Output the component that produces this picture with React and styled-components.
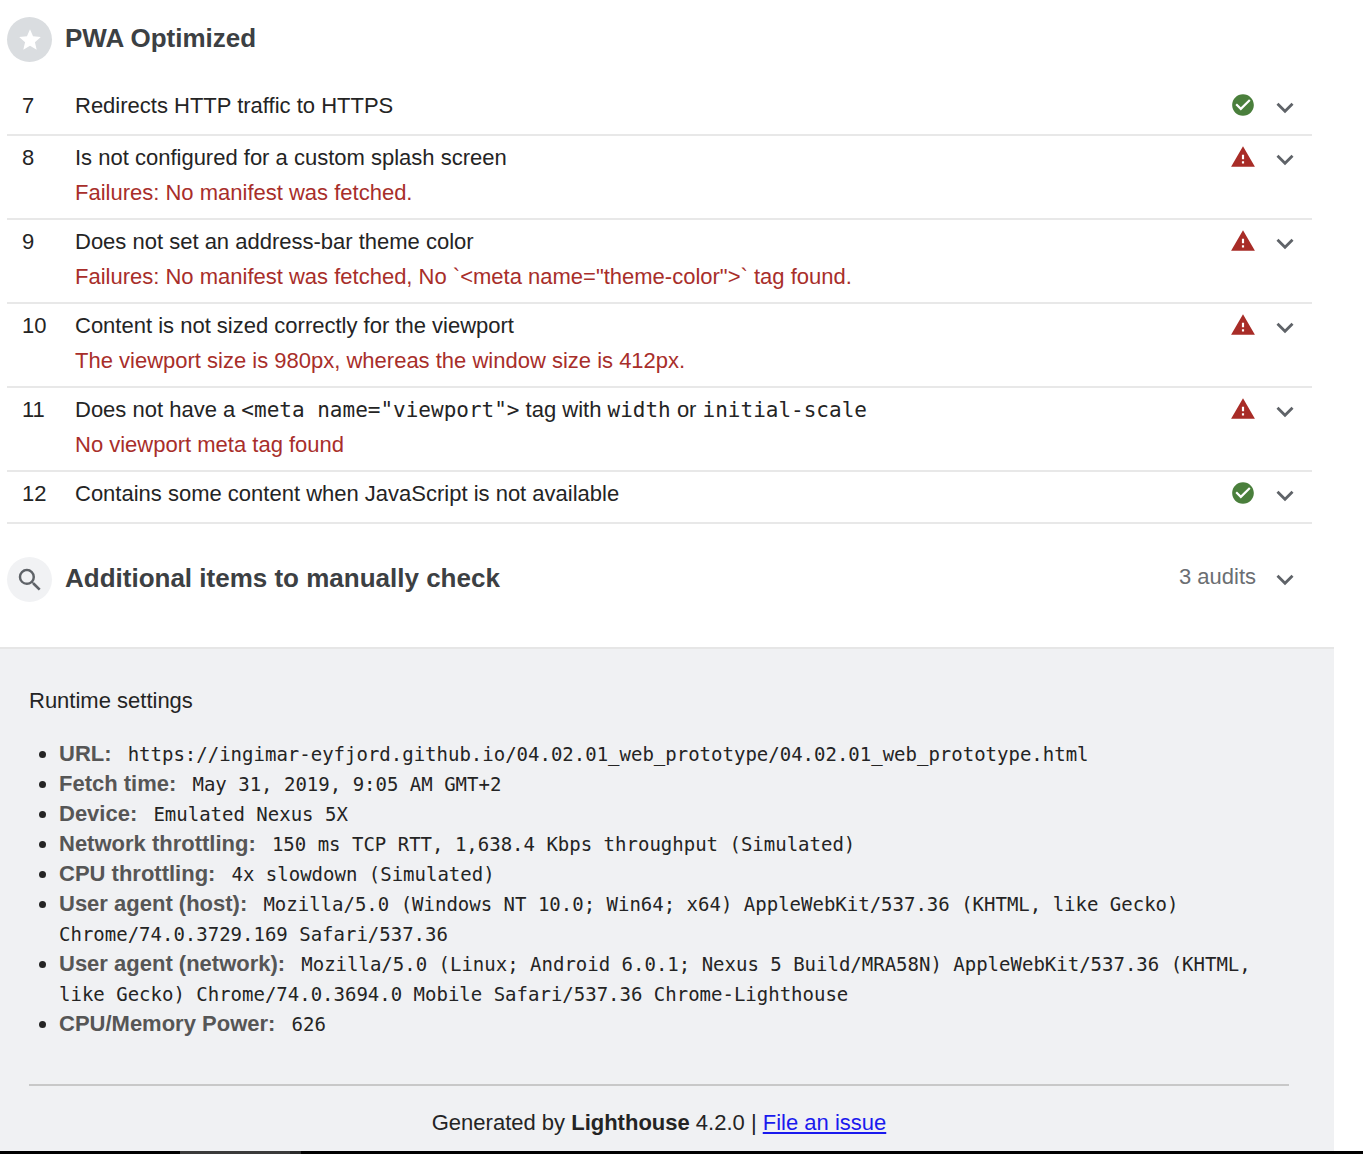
import React, { useState } from "react";
import styled, { createGlobalStyle } from "styled-components";

const GlobalStyle = createGlobalStyle`
  * { box-sizing: border-box; }
  body {
    margin: 0;
    background: #fff;
    color: #242424;
    font-family: "Liberation Sans", Arial, sans-serif;
    font-size: 22px;
    line-height: 36px;
  }
`;

const Page = styled.div`
  min-height: 100vh;
  display: flex;
  flex-direction: column;
`;

const Report = styled.div`
  flex: 1;
  display: flex;
  flex-direction: column;
  margin-right: 29px;
`;

const Category = styled.main`
  padding: 17px 22px 45px 7px;
`;

const GroupHeader = styled.header`
  display: flex;
  align-items: center;
  gap: 13px;
  padding-right: 10px;
`;

const Badge = styled.span`
  display: grid;
  place-items: center;
  flex: none;
  width: 45px;
  height: 45px;
  border-radius: 50%;
  color: ${(p) => (p.$strong ? "#fff" : "#5f6368")};
  background: ${(p) => (p.$strong ? "#dadde0" : "#f1f2f4")};
`;

const GroupTitle = styled.h2`
  flex: 1;
  margin: 0;
  padding-bottom: 3px;
  font-size: 26px;
  font-weight: 700;
  color: #3c4043;
`;

const Side = styled.div`
  display: flex;
  align-items: center;
  gap: 12px;
  height: 32px;
`;

const GroupSide = styled(Side)`
  height: 45px;
  padding-bottom: 5px;
`;

const AuditCount = styled.span`
  color: #6b6e72;
`;

const AuditList = styled.div`
  margin: 22px 0 33px;
`;

const Audit = styled.section`
  display: flex;
  min-height: 52px;
  padding: 5px 10px 8px 15px;
  border-bottom: 2px solid #e8e8e8;
  line-height: 34px;
`;

const AuditIndex = styled.span`
  flex: none;
  width: 53px;
`;

const AuditText = styled.div`
  flex: 1;
`;

const AuditTitle = styled.div`
  code {
    font-family: "DejaVu Sans Mono", monospace;
    font-size: 21px;
    line-height: 24px;
  }
`;

const Explanation = styled.div`
  line-height: 35px;
  color: #a82e2a;
`;

const Toggle = styled.button`
  display: flex;
  padding: 0;
  border: 0;
  background: none;
  color: #5f6368;
  cursor: pointer;
`;

const Footer = styled.footer`
  flex: 1;
  padding: 34px 45px 8px 29px;
  border-top: 2px solid #e6e6e6;
  background: #f0f1f3;
`;

const SettingsTitle = styled.div`
  margin-bottom: 20px;
`;

const Settings = styled.ul`
  margin: 0 0 45px;
  padding-left: 30px;
  line-height: 30px;
`;

const SettingName = styled.span`
  margin-right: 10px;
  font-weight: 700;
  color: #565656;
`;

const SettingValue = styled.span`
  font-family: "DejaVu Sans Mono", monospace;
  font-size: 19px;
  line-height: 24px;
`;

const Generated = styled.div`
  padding-top: 19px;
  border-top: 2px solid #c8c8c8;
  text-align: center;

  a { color: #1a1aee; }
`;

const Taskbar = styled.div`
  display: flex;
  height: 3px;
  padding-left: 180px;
  background: #000;
`;

const TaskbarItem = styled.span`
  width: ${(p) => p.$width}px;
  background: ${(p) => p.$color};
`;

const Icon = ({ size, color = "currentColor", viewBox = "0 0 24 24", d }) => (
  <svg width={size} height={size} viewBox={viewBox} fill={color} aria-hidden="true">
    <path d={d} />
  </svg>
);

const StarIcon = () => (
  <Icon size={26} d="M12 17.27L18.18 21l-1.64-7.03L22 9.24l-7.19-.61L12 2 9.19 8.63 2 9.24l5.46 4.73L5.82 21z" />
);
const SearchIcon = () => (
  <Icon size={30} d="M15.5 14h-.79l-.28-.27A6.47 6.47 0 0 0 16 9.5 6.5 6.5 0 1 0 9.5 16c1.61 0 3.09-.59 4.23-1.57l.27.28v.79l5 4.99L20.49 19l-4.99-5zm-6 0C7.01 14 5 11.99 5 9.5S7.01 5 9.5 5 14 7.01 14 9.5 11.99 14 9.5 14z" />
);
const PassIcon = () => (
  <Icon size={26} color="#4a7f3c" d="M12 2C6.48 2 2 6.48 2 12s4.48 10 10 10 10-4.48 10-10S17.52 2 12 2zm-2 15l-5-5 1.41-1.41L10 14.17l7.59-7.59L19 8l-9 9z" />
);
const FailIcon = () => (
  <Icon size={26} color="#a82c27" d="M1 21h22L12 2 1 21zm12-3h-2v-2h2v2zm0-4h-2v-4h2v4z" />
);

function Chevron({ label }) {
  const [open, setOpen] = useState(false);
  return (
    <Toggle type="button" aria-label={label} aria-expanded={open} onClick={() => setOpen(!open)}>
      <Icon size={34} viewBox="0 -1.8 24 24" d="M16.59 8.59L12 13.17 7.41 8.59 6 10l6 6 6-6z" />
    </Toggle>
  );
}

const audits = [
  { n: 7, pass: true, title: "Redirects HTTP traffic to HTTPS" },
  { n: 8, title: "Is not configured for a custom splash screen", why: "Failures: No manifest was fetched." },
  {
    n: 9,
    title: "Does not set an address-bar theme color",
    why: 'Failures: No manifest was fetched, No `<meta name="theme-color">` tag found.',
  },
  {
    n: 10,
    title: "Content is not sized correctly for the viewport",
    why: "The viewport size is 980px, whereas the window size is 412px.",
  },
  {
    n: 11,
    title: (
      <>
        Does not have a <code>{'<meta name="viewport">'}</code> tag with <code>width</code> or{" "}
        <code>initial-scale</code>
      </>
    ),
    why: "No viewport meta tag found",
  },
  { n: 12, pass: true, title: "Contains some content when JavaScript is not available" },
];

const settings = [
  ["URL:", "https://ingimar-eyfjord.github.io/04.02.01_web_prototype/04.02.01_web_prototype.html"],
  ["Fetch time:", "May 31, 2019, 9:05 AM GMT+2"],
  ["Device:", "Emulated Nexus 5X"],
  ["Network throttling:", "150 ms TCP RTT, 1,638.4 Kbps throughput (Simulated)"],
  ["CPU throttling:", "4x slowdown (Simulated)"],
  [
    "User agent (host):",
    "Mozilla/5.0 (Windows NT 10.0; Win64; x64) AppleWebKit/537.36 (KHTML, like Gecko) Chrome/74.0.3729.169 Safari/537.36",
  ],
  [
    "User agent (network):",
    "Mozilla/5.0 (Linux; Android 6.0.1; Nexus 5 Build/MRA58N) AppleWebKit/537.36 (KHTML, like Gecko) Chrome/74.0.3694.0 Mobile Safari/537.36 Chrome-Lighthouse",
  ],
  ["CPU/Memory Power:", "626"],
];

export default function App() {
  return (
    <Page>
      <GlobalStyle />
      <Report>
        <Category>
          <GroupHeader>
            <Badge $strong><StarIcon /></Badge>
            <GroupTitle>PWA Optimized</GroupTitle>
          </GroupHeader>
          <AuditList>
            {audits.map((a) => (
              <Audit key={a.n}>
                <AuditIndex>{a.n}</AuditIndex>
                <AuditText>
                  <AuditTitle>{a.title}</AuditTitle>
                  {a.why && <Explanation>{a.why}</Explanation>}
                </AuditText>
                <Side>
                  {a.pass ? <PassIcon /> : <FailIcon />}
                  <Chevron label={`Toggle audit ${a.n}`} />
                </Side>
              </Audit>
            ))}
          </AuditList>
          <GroupHeader>
            <Badge><SearchIcon /></Badge>
            <GroupTitle>Additional items to manually check</GroupTitle>
            <GroupSide>
              <AuditCount>3 audits</AuditCount>
              <Chevron label="Toggle manual audits" />
            </GroupSide>
          </GroupHeader>
        </Category>
        <Footer>
          <SettingsTitle>Runtime settings</SettingsTitle>
          <Settings>
            {settings.map(([name, value]) => (
              <li key={name}>
                <SettingName>{name}</SettingName> <SettingValue>{value}</SettingValue>
              </li>
            ))}
          </Settings>
          <Generated>
            Generated by <b>Lighthouse</b> 4.2.0 |{" "}
            <a href="https://github.com/GoogleChrome/lighthouse/issues">File an issue</a>
          </Generated>
        </Footer>
      </Report>
      <Taskbar>
        <TaskbarItem $width={110} $color="#3a3a3a" />
        <TaskbarItem $width={11} $color="#2b2b2b" />
      </Taskbar>
    </Page>
  );
}
